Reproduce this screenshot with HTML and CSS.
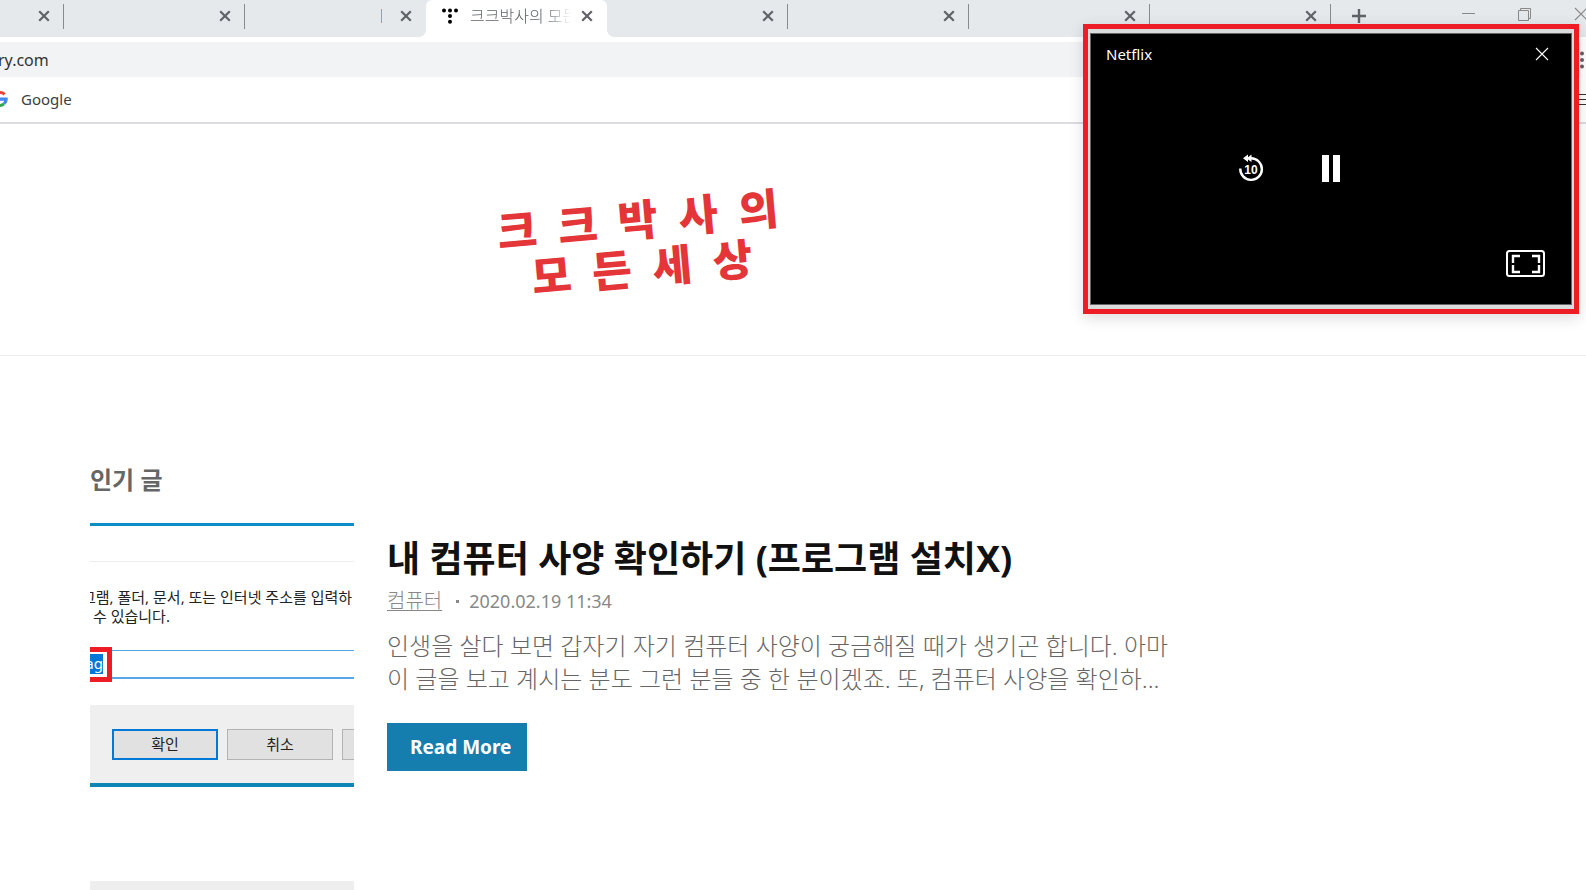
FILE: index.html
```html
<!DOCTYPE html>
<html lang="ko">
<head>
<meta charset="utf-8">
<title>크크박사의 모든세상</title>
<link rel="stylesheet" href="styles.css">
</head>
<body>
<svg width="0" height="0" class="defs" aria-hidden="true">
  <symbol id="close" viewBox="0 0 16 16"><path d="M3.2 3.2l9.6 9.6M12.800 3.200l-9.600 9.600" fill="none" stroke="currentColor" stroke-width="2.2"/></symbol>
  <symbol id="thin-close" viewBox="0 0 14 14"><path d="M1 1l12 12M13 1L1 13" fill="none" stroke="currentColor" stroke-width="1.1"/></symbol>
</svg>

<div class="tabstrip">
  <div class="tab tab-first"><button class="tab-close" aria-label="탭 닫기"><svg><use href="#close"/></svg></button></div>
  <div class="tab"><button class="tab-close" aria-label="탭 닫기"><svg><use href="#close"/></svg></button></div>
  <div class="tab tab-plain"><span class="title-edge"></span><button class="tab-close" aria-label="탭 닫기"><svg><use href="#close"/></svg></button></div>
  <div class="tab tab-active">
    <svg class="favicon" viewBox="0 0 16 16"><circle cx="2" cy="2.4" r="2"/><circle cx="8" cy="2.4" r="2"/><circle cx="14" cy="2.4" r="2"/><circle cx="8" cy="8" r="2"/><circle cx="8" cy="13.8" r="2"/></svg>
    <span class="tab-title">크크박사의 모든</span>
    <button class="tab-close" aria-label="탭 닫기"><svg><use href="#close"/></svg></button>
  </div>
  <div class="tab"><button class="tab-close" aria-label="탭 닫기"><svg><use href="#close"/></svg></button></div>
  <div class="tab"><button class="tab-close" aria-label="탭 닫기"><svg><use href="#close"/></svg></button></div>
  <div class="tab"><button class="tab-close" aria-label="탭 닫기"><svg><use href="#close"/></svg></button></div>
  <div class="tab"><button class="tab-close" aria-label="탭 닫기"><svg><use href="#close"/></svg></button></div>
  <button class="new-tab" aria-label="새 탭"><svg viewBox="0 0 16 16"><path d="M8 1v14M1 8h14" stroke="currentColor" stroke-width="2.4"/></svg></button>
  <div class="window-buttons">
    <button aria-label="최소화"><svg viewBox="0 0 14 14"><path d="M0 6.5h13" stroke="currentColor"/></svg></button>
    <button aria-label="이전 크기로"><svg viewBox="0 0 14 14"><path d="M.5 3.5h10v10h-10zM2.500 3.500v-2h10v10h-2" fill="none" stroke="currentColor"/></svg></button>
    <button aria-label="닫기"><svg><use href="#thin-close"/></svg></button>
  </div>
</div>

<div class="toolbar">
  <input class="address" type="text" value="ry.com" aria-label="주소창">
  <button class="menu-button" aria-label="메뉴"><svg viewBox="0 0 4 18"><circle cx="2" cy="2.500" r="2"/><circle cx="2" cy="9" r="2"/><circle cx="2" cy="15.500" r="2"/></svg></button>
</div>

<div class="bookmarks">
  <a class="bookmark" href="#">
    <svg class="google" viewBox="8 0 8 16"><path d="M8 1.600a6.400 6.400 0 0 1 4.600 1.800" fill="none" stroke="#ea4335" stroke-width="3"/><path d="M8 6.600h7.600A8 8 0 0 1 13.200 13.800L10.700 11.900A5 5 0 0 0 12.200 9.700H8z" fill="#4285f4"/><path d="M8 14.400a6.400 6.400 0 0 0 4-1.400" fill="none" stroke="#34a853" stroke-width="3"/></svg>
    <span>Google</span>
  </a>
  <button class="reading-list" aria-label="읽기 목록"><svg viewBox="0 0 10 12"><path d="M0 1.500h10M0 6.500h10M0 11.500h10" stroke="currentColor"/></svg></button>
</div>

<header class="site-header">
  <h1 class="logo">
    <a href="#">
      <span class="logo-row"><span>크</span><span>크</span><span>박</span><span>사</span><span>의</span></span>
      <span class="logo-row"><span>모</span><span>든</span><span>세</span><span>상</span></span>
    </a>
  </h1>
</header>

<main class="content">
  <h2 class="section-title">인기 글</h2>
  <article class="post">
    <div class="thumb">
      <div class="run-text">그램, 폴더, 문서, 또는 인터넷 주소를 입력하<br>수 있습니다.</div>
      <div class="run-input"><span class="mark"><span class="selected">ag</span></span></div>
      <div class="run-actions">
        <button class="dialog-button dialog-default">확인</button>
        <button class="dialog-button">취소</button>
        <button class="dialog-button" aria-label="찾아보기"></button>
      </div>
    </div>
    <div class="post-body">
      <h3 class="post-title">내 컴퓨터 사양 확인하기 (프로그램 설치X)</h3>
      <p class="meta"><a href="#">컴퓨터</a><span class="dot"></span><time datetime="2020-02-19T11:34">2020.02.19 11:34</time></p>
      <p class="summary">인생을 살다 보면 갑자기 자기 컴퓨터 사양이 궁금해질 때가 생기곤 합니다. 아마 이 글을 보고 계시는 분도 그런 분들 중 한 분이겠죠. 또, 컴퓨터 사양을 확인하...</p>
      <a class="read-more" href="#">Read More</a>
    </div>
  </article>
  <article class="post next-post"><div class="thumb-blank"></div></article>
</main>

<aside class="pip-frame">
  <div class="pip">
    <div class="pip-bar"><span>Netflix</span><button aria-label="닫기"><svg><use href="#thin-close"/></svg></button></div>
    <div class="pip-controls">
      <button class="back-ten" aria-label="10초 뒤로">
        <svg viewBox="0 0 24 28"><path d="M1.300 14.500A10.800 10.800 0 1 0 12 4.300" fill="none" stroke="#fff" stroke-width="2.400"/><path d="M4 4.300L9 .5v2.700L12.500.5v7.600L9 5.400v2.700z" fill="#fff"/><text x="12" y="19.500" text-anchor="middle" class="ten">10</text></svg>
      </button>
      <button class="pause" aria-label="일시중지"><svg viewBox="0 0 18 27"><path d="M0 0h7v27H0zM11 0h7v27h-7z" fill="#fff"/></svg></button>
    </div>
    <button class="expand" aria-label="전체 화면"><svg viewBox="0 0 39 27"><rect x="1" y="1" width="37" height="25" rx="2.500" fill="none" stroke="#fff" stroke-width="2"/><path d="M14 6H7v7M7 15v7h7M26 6h7v7M33 15v7h-7" fill="none" stroke="#fff" stroke-width="2.400"/></svg></button>
  </div>
</aside>
</body>
</html>
```

FILE: styles.css
```css
* { box-sizing: border-box; }
body {
  margin: 0;
  min-height: 100vh;
  background: #fff;
  color: #666;
  font-family: "Noto Sans", "Noto Sans CJK KR", sans-serif;
  overflow: hidden;
}
button { border: 0; padding: 0; background: none; font: inherit; color: inherit; }
h1, h2, h3, p { margin: 0; }
svg { display: block; }
.defs { position: absolute; }

.tabstrip { display: flex; height: 37px; background: #e5e9ec; color: #5f6368; }
.tab {
  position: relative;
  display: flex;
  flex: 0 0 181px;
  min-width: 0;
  height: 32px;
  align-items: center;
  justify-content: flex-end;
  padding-right: 12px;
}
.tab-first { flex-basis: 64px; }
.tab::after {
  content: "";
  position: absolute;
  top: 4px;
  right: 0;
  width: 1px;
  height: 25px;
  background: #868b90;
}
.tab-plain::after, .tab-active::after { display: none; }
.tab-close svg { width: 16px; height: 16px; }
.title-edge { width: 1px; height: 14px; margin-right: 16px; background: #7aa9d6; }
.tab-active {
  height: 37px;
  padding: 0 12px 5px 16px;
  background: #fff;
  border-radius: 6px 6px 0 0;
}
.tab-active::before {
  content: "";
  position: absolute;
  left: -8px;
  right: -8px;
  bottom: 0;
  height: 8px;
  background:
    radial-gradient(circle at 0 0, transparent 8px, #fff 8px) left / 8px 8px no-repeat,
    radial-gradient(circle at 100% 0, transparent 8px, #fff 8px) right / 8px 8px no-repeat;
}
.favicon { flex: none; width: 16px; height: 16px; fill: #000; }
.tab-title {
  flex: 1;
  min-width: 0;
  overflow: hidden;
  white-space: nowrap;
  font-size: 16px;
  line-height: 24px;
  font-weight: 300;
  margin: 0 8px 0 12px;
  -webkit-mask-image: linear-gradient(to right, #000 75%, transparent);
  mask-image: linear-gradient(to right, #000 75%, transparent);
}
.new-tab { margin: 0 20px; height: 32px; }
.new-tab svg { width: 16px; height: 16px; }
.window-buttons { display: flex; gap: 42px; height: 27px; margin-left: auto; margin-right: -2px; color: #888; }
.window-buttons svg { width: 14px; height: 14px; }

.toolbar { display: flex; padding-top: 5px; }
.address {
  flex: 1;
  height: 35px;
  border: 0;
  padding: 0;
  text-indent: -2px;
  background: #f1f3f4;
  color: #333;
  font: 16px "Noto Sans", sans-serif;
}
.menu-button { width: 6px; }
.menu-button svg { width: 4px; height: 18px; fill: #5f6368; }
.bookmarks {
  display: flex;
  justify-content: space-between;
  align-items: center;
  height: 47px;
  padding-bottom: 1px;
  border-bottom: 2px solid #dadce0;
}
.bookmark { display: flex; align-items: center; gap: 13px; color: #3c4043; font-size: 15px; line-height: 20px; text-decoration: none; }
.google { width: 8px; height: 16px; }
.reading-list svg { width: 10px; height: 12px; color: #333; }

.site-header { height: 232px; padding: 72px 306px 0 0; border-bottom: 1px solid #eee; }
.logo { display: flex; justify-content: center; font-size: 43px; line-height: 48px; font-weight: 900; }
.logo a { color: #e43538; text-decoration: none; transform: rotate(-5deg); }
.logo-row { display: flex; justify-content: center; gap: 21px; }

.content { padding: 108px 90px 0; }
.section-title { font-size: 24px; line-height: 32px; font-weight: 700; }
.post { display: flex; gap: 33px; margin-top: 27px; }
.thumb {
  flex: none;
  width: 264px;
  height: 264px;
  overflow: hidden;
  border-top: 3px solid #0c8fc8;
  border-bottom: 4px solid #0d86b4;
  color: #222;
}
.run-text {
  margin-top: 35px;
  padding: 26px 0 0 3px;
  border-top: 1px solid #eee;
  font-size: 15px;
  line-height: 19px;
  text-indent: -11px;
  white-space: nowrap;
}
.run-input { display: flex; align-items: center; height: 29px; margin: 24px 0 26px; border: 1px solid #58a6e6; border-width: 1px 0 2px; }
.mark { flex: none; display: flex; align-items: center; height: 35px; width: 22px; padding-right: 4px; border: 5px solid #ee1c25; border-left: 0; }
.selected { width: 14px; height: 20px; direction: rtl; overflow: hidden; background: #0078d7; color: #fff; font-size: 15px; line-height: 18px; }
.run-actions { display: flex; gap: 9px; height: 79px; padding: 24px 0 0 22px; background: #efefef; }
.dialog-button { flex: none; width: 106px; height: 31px; padding-bottom: 2px; border: 1px solid #b3b3b3; background: #e1e1e1; font-size: 15px; line-height: 20px; }
.dialog-default { border: 2px solid #0078d7; }

.post-body { flex: 1; max-width: 800px; padding-top: 11px; }
.post-title { color: #111; font-size: 36px; line-height: 50px; font-weight: 700; white-space: nowrap; }
.meta { display: flex; align-items: center; margin-top: 3px; color: #888; font-size: 18px; line-height: 28px; }
.meta a { color: inherit; font-size: 20px; font-weight: 300; text-decoration-thickness: 1px; text-underline-offset: 2px; }
.dot { width: 3px; height: 3px; margin: 0 10px 0 14px; background: #888; }
.summary { margin-top: 14px; font-size: 24px; line-height: 33px; font-weight: 300; }
.read-more {
  display: inline-block;
  margin-top: 28px;
  padding: 10px 16px 10px 23px;
  background: #167daf;
  color: #fff;
  font-size: 19px;
  line-height: 28px;
  font-weight: 700;
  text-decoration: none;
}
.next-post { margin-top: 94px; }
.thumb-blank { width: 264px; height: 264px; background: #eee; }

.pip-frame {
  position: absolute;
  top: 24px;
  right: 7px;
  width: 496px;
  border: 5px solid #ee1c25;
  padding: 4px 2px;
  background: #d9dbdc;
  box-shadow: 0 4px 14px rgba(0, 0, 0, 0.14);
}
.pip { display: flex; flex-direction: column; height: 272px; border: 1px solid #666; background: #000; color: #fff; }
.pip-bar { display: flex; justify-content: space-between; align-items: center; padding: 9px 22px 0 15px; font-size: 15px; line-height: 22px; }
.pip-bar svg { width: 14px; height: 14px; }
.pip-controls { display: flex; justify-content: center; align-items: center; gap: 58px; margin-top: 89px; padding-right: 84px; }
.back-ten svg { width: 26px; height: 28px; }
.ten { font: 700 12px "Liberation Sans", sans-serif; fill: #fff; }
.pause svg { width: 18px; height: 27px; }
.expand { align-self: flex-end; margin: auto 26px 27px 0; }
.expand svg { width: 39px; height: 27px; }
```
